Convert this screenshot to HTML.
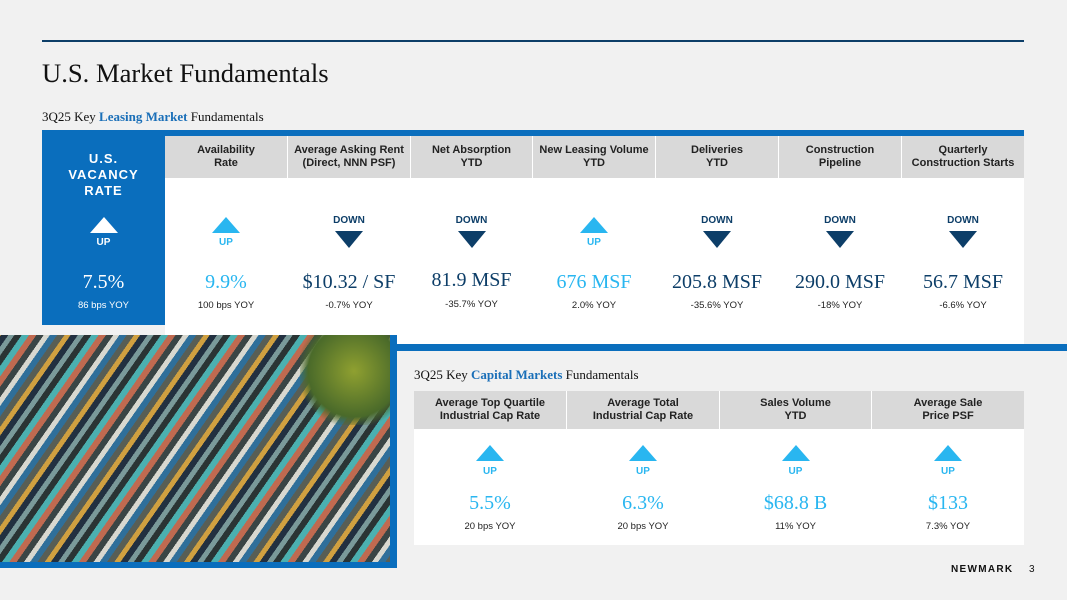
<!DOCTYPE html>
<html><head><style>
*{margin:0;padding:0;box-sizing:border-box}
html,body{width:1067px;height:600px;overflow:hidden}
body{background:#f1f1f1;position:relative;font-family:"Liberation Sans",sans-serif}
.a{position:absolute}
.serif{font-family:"Liberation Serif",serif}
.hd{position:absolute;background:#d9d9d9;color:#222;font-weight:bold;font-size:11px;line-height:13px;text-align:center;display:flex;align-items:center;justify-content:center}
.col{position:absolute;text-align:center;height:110px}
.col>*{position:absolute;left:0;right:0}
.up{width:0;height:0;border-left:14px solid transparent;border-right:14px solid transparent;border-bottom:16px solid #29b6f0;margin:0 auto}
.dn{width:0;height:0;border-left:14px solid transparent;border-right:14px solid transparent;border-top:17px solid #0d3e68;margin:0 auto}
.lbl{font-size:10px;font-weight:bold;line-height:12px}
.val{font-family:"Liberation Serif",serif;font-size:20px;line-height:24px}
.yoy{font-size:9.5px;color:#222;line-height:12px}
.t .up{top:7px}.t .ul{top:27px}
.t .dl{top:5px}.t .dn{top:21px}
.t .val{top:60px}.t .yoy{top:90px}
.b .up{top:7px}.b .ul{top:28px}
.b .val{top:53px}.b .yoy{top:83px}
</style></head><body>
<div class="a" style="left:42px;top:40px;width:982px;height:2px;background:#0d3e68"></div>
<div class="a serif" style="left:42px;top:58px;font-size:26.6px;color:#111">U.S. Market Fundamentals</div>
<div class="a serif" style="left:42px;top:109px;font-size:13px;color:#111">3Q25 Key <b style="color:#1a6fb8">Leasing Market</b> Fundamentals</div>

<div class="a" style="left:42px;top:130px;width:982px;height:6px;background:#0a6ebd"></div>
<div class="a" style="left:42px;top:130px;width:123px;height:195px;background:#0a6ebd"></div>
<div class="a" style="left:165px;top:136px;width:859px;height:208px;background:#fff"></div>
<div class="a" style="left:42px;top:151px;width:123px;text-align:center;color:#fff;font-weight:bold;font-size:13px;line-height:16px;letter-spacing:1px">U.S.<br>VACANCY<br>RATE</div>
<div class="col t" style="left:42px;top:210px;width:123px;color:#fff">
<div class="up" style="border-bottom-color:#fff"></div>
<div class="lbl ul">UP</div>
<div class="val" style="color:#fff">7.5%</div>
<div class="yoy" style="color:#fff">86 bps YOY</div></div>

<div class="hd" style="left:165px;top:136px;width:122px;height:42px">Availability<br>Rate</div>
<div class="hd" style="left:288px;top:136px;width:122px;height:42px">Average Asking Rent<br>(Direct, NNN PSF)</div>
<div class="hd" style="left:411px;top:136px;width:121px;height:42px">Net Absorption<br>YTD</div>
<div class="hd" style="left:533px;top:136px;width:122px;height:42px">New Leasing Volume<br>YTD</div>
<div class="hd" style="left:656px;top:136px;width:122px;height:42px">Deliveries<br>YTD</div>
<div class="hd" style="left:779px;top:136px;width:122px;height:42px">Construction<br>Pipeline</div>
<div class="hd" style="left:902px;top:136px;width:122px;height:42px">Quarterly<br>Construction Starts</div>

<div class="col t" style="left:165px;top:210px;width:122px"><div class="up"></div><div class="lbl ul" style="color:#29b6f0">UP</div><div class="val" style="color:#29b6f0">9.9%</div><div class="yoy">100 bps YOY</div></div>
<div class="col t" style="left:288px;top:210px;width:122px"><div class="lbl dl" style="color:#0d3e68">DOWN</div><div class="dn"></div><div class="val" style="color:#0d3e68">$10.32 / SF</div><div class="yoy">-0.7% YOY</div></div>
<div class="col t" style="left:411px;top:210px;width:121px"><div class="lbl dl" style="color:#0d3e68">DOWN</div><div class="dn"></div><div class="val" style="color:#0d3e68;top:58px">81.9 MSF</div><div class="yoy" style="top:89px">-35.7% YOY</div></div>
<div class="col t" style="left:533px;top:210px;width:122px"><div class="up"></div><div class="lbl ul" style="color:#29b6f0">UP</div><div class="val" style="color:#29b6f0">676 MSF</div><div class="yoy">2.0% YOY</div></div>
<div class="col t" style="left:656px;top:210px;width:122px"><div class="lbl dl" style="color:#0d3e68">DOWN</div><div class="dn"></div><div class="val" style="color:#0d3e68">205.8 MSF</div><div class="yoy">-35.6% YOY</div></div>
<div class="col t" style="left:779px;top:210px;width:122px"><div class="lbl dl" style="color:#0d3e68">DOWN</div><div class="dn"></div><div class="val" style="color:#0d3e68">290.0 MSF</div><div class="yoy">-18% YOY</div></div>
<div class="col t" style="left:902px;top:210px;width:122px"><div class="lbl dl" style="color:#0d3e68">DOWN</div><div class="dn"></div><div class="val" style="color:#0d3e68">56.7 MSF</div><div class="yoy">-6.6% YOY</div></div>

<div class="a" style="left:390px;top:344px;width:677px;height:7px;background:#0a6ebd"></div>
<div class="a" style="left:0;top:335px;width:397px;height:233px;background:#0a6ebd"></div>
<div class="a" style="left:0;top:335px;width:390px;height:227px;background:#3d4a48;overflow:hidden">
<div style="position:absolute;left:-200px;top:-300px;width:900px;height:900px;transform:rotate(35deg);background:repeating-linear-gradient(90deg,#2a3434 0 6px,#4bb0b0 6px 12px,#c06a50 12px 18px,#3a4545 18px 24px,#d8d8d0 24px 29px,#2f6f9a 29px 35px,#585e55 35px 41px,#d0a040 41px 46px,#223040 46px 52px,#7a9a9a 52px 57px)"></div>
<div style="position:absolute;left:300px;top:0;width:90px;height:90px;background:radial-gradient(circle at 60% 40%,#8fa030,#4a6a2a 60%,transparent 75%)"></div>
</div>

<div class="a serif" style="left:414px;top:367px;font-size:13px;color:#111">3Q25 Key <b style="color:#1a6fb8">Capital Markets</b> Fundamentals</div>
<div class="a" style="left:414px;top:391px;width:610px;height:154px;background:#fff"></div>
<div class="hd" style="left:414px;top:391px;width:152px;height:38px">Average Top Quartile<br>Industrial Cap Rate</div>
<div class="hd" style="left:567px;top:391px;width:152px;height:38px">Average Total<br>Industrial Cap Rate</div>
<div class="hd" style="left:720px;top:391px;width:151px;height:38px">Sales Volume<br>YTD</div>
<div class="hd" style="left:872px;top:391px;width:152px;height:38px">Average Sale<br>Price PSF</div>
<div class="col b" style="left:414px;top:438px;width:152px"><div class="up"></div><div class="lbl ul" style="color:#29b6f0">UP</div><div class="val" style="color:#29b6f0">5.5%</div><div class="yoy">20 bps YOY</div></div>
<div class="col b" style="left:567px;top:438px;width:152px"><div class="up"></div><div class="lbl ul" style="color:#29b6f0">UP</div><div class="val" style="color:#29b6f0">6.3%</div><div class="yoy">20 bps YOY</div></div>
<div class="col b" style="left:720px;top:438px;width:151px"><div class="up"></div><div class="lbl ul" style="color:#29b6f0">UP</div><div class="val" style="color:#29b6f0">$68.8 B</div><div class="yoy">11% YOY</div></div>
<div class="col b" style="left:872px;top:438px;width:152px"><div class="up"></div><div class="lbl ul" style="color:#29b6f0">UP</div><div class="val" style="color:#29b6f0">$133</div><div class="yoy">7.3% YOY</div></div>

<div class="a" style="left:951px;top:564px;font-size:10px;font-weight:bold;letter-spacing:1.3px;color:#111">NEWMARK</div>
<div class="a" style="left:1029px;top:564px;font-size:10px;color:#111">3</div>
</body></html>
